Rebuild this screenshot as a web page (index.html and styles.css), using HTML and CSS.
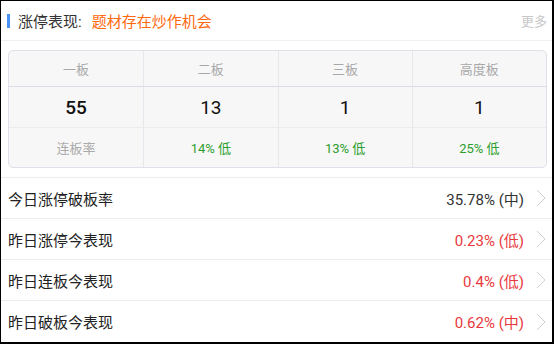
FILE: index.html
```html
<!DOCTYPE html>
<html lang="zh">
<head>
<meta charset="utf-8">
<link rel="stylesheet" href="styles.css">
</head>
<body>
<div class="frame">
  <div class="header">
    <span class="bar"></span>
    <span class="title">涨停表现:</span>
    <span class="theme">题材存在炒作机会</span>
    <span class="more">更多</span>
  </div>
  <div class="board">
    <div class="cell head">一板</div>
    <div class="cell head">二板</div>
    <div class="cell head">三板</div>
    <div class="cell head">高度板</div>
    <div class="cell num bold">55</div>
    <div class="cell num">13</div>
    <div class="cell num">1</div>
    <div class="cell num">1</div>
    <div class="cell foot label">连板率</div>
    <div class="cell foot green">14% 低</div>
    <div class="cell foot green">13% 低</div>
    <div class="cell foot green">25% 低</div>
  </div>
  <div class="list">
    <div class="row"><span class="name">今日涨停破板率</span><span class="val">35.78% (中)</span><svg class="chev" width="10" height="18" viewBox="0 0 10 18"><polyline points="1,1 9,9 1,17" fill="none" stroke="#cfcfcf" stroke-width="1"/></svg></div>
    <div class="row"><span class="name">昨日涨停今表现</span><span class="val red">0.23% (低)</span><svg class="chev" width="10" height="18" viewBox="0 0 10 18"><polyline points="1,1 9,9 1,17" fill="none" stroke="#cfcfcf" stroke-width="1"/></svg></div>
    <div class="row"><span class="name">昨日连板今表现</span><span class="val red">0.4% (低)</span><svg class="chev" width="10" height="18" viewBox="0 0 10 18"><polyline points="1,1 9,9 1,17" fill="none" stroke="#cfcfcf" stroke-width="1"/></svg></div>
    <div class="row last"><span class="name">昨日破板今表现</span><span class="val red">0.62% (中)</span><svg class="chev" width="10" height="18" viewBox="0 0 10 18"><polyline points="1,1 9,9 1,17" fill="none" stroke="#cfcfcf" stroke-width="1"/></svg></div>
  </div>
</div>
</body>
</html>
```
FILE: styles.css
```css
* { box-sizing: border-box; }
html, body { margin: 0; padding: 0; background: #fff; }
body {
  font-family: Roboto, "Noto Sans CJK SC", "Noto Sans", sans-serif;
  color: #333;
}
.frame {
  width: 554px;
  height: 344px;
  border-top: 1px solid #000;
  border-left: 1px solid #000;
  border-right: 2px solid #000;
  border-bottom: 2px solid #000;
  background: #fff;
  overflow: hidden;
}
.header {
  height: 40px;
  display: flex;
  align-items: center;
  padding: 0 5px 0 6px;
  border-bottom: 1px solid #f0f0f0;
}
.bar {
  width: 3px;
  height: 14px;
  background: #4b92f6;
  margin-right: 8px;
}
.title {
  font-size: 15px;
  color: #333;
  margin-right: 10px;
}
.theme {
  font-size: 15px;
  color: #ff6a10;
}
.more {
  margin-left: auto;
  font-size: 13px;
  color: #c8c8c8;
}
.board {
  margin: 9px 5px 0 7px;
  border: 1px solid #e0e0ea;
  border-radius: 5px;
  background: #f7f7f7;
  display: grid;
  grid-template-columns: repeat(4, 1fr);
  grid-template-rows: 36px 41px 39px;
}
.cell {
  display: flex;
  align-items: center;
  justify-content: center;
  border-left: 1px solid #e6e6ec;
}
.cell:nth-child(4n+1) { border-left: none; }
.head {
  font-size: 13px;
  color: #a8a8a8;
  border-bottom: 1px solid #dcdce6;
}
.num {
  font-size: 19px;
  color: #111;
  border-bottom: 1px solid #ececec;
  padding-top: 1px;
}
.num.bold { font-weight: 500; }
.foot { font-size: 13px; }
.label { color: #aaa; font-size: 13px; }
.green { color: #2c9e2c; }
.list {
  margin-top: 9px;
  border-top: 1px solid #ececec;
}
.row {
  height: 41px;
  display: flex;
  align-items: center;
  padding: 0 6px 0 7px;
  border-bottom: 1px solid #ececec;
}
.row.last { border-bottom: none; }
.name { font-size: 15px; color: #222; }
.val {
  margin-left: auto;
  font-size: 15px;
  color: #333;
  margin-right: 12px;
}
.val.red { color: #e8383d; }
.chev { display: block; }
```
